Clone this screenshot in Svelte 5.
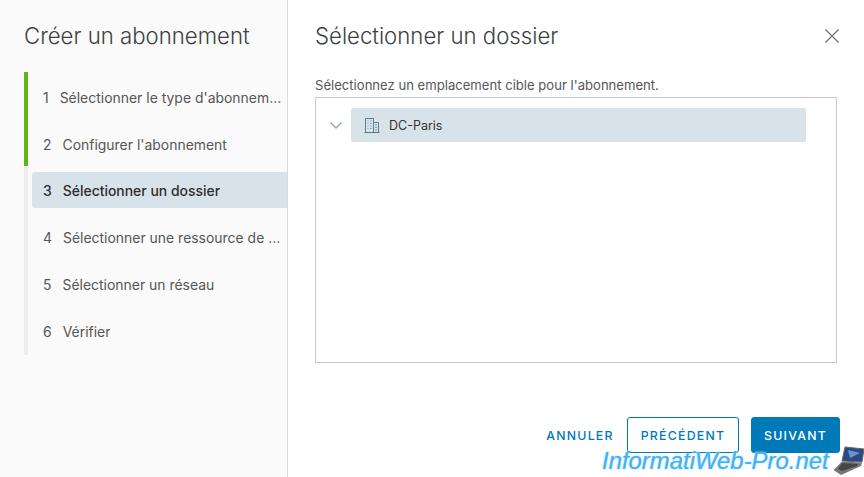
<script>
    const steps = [
        "Sélectionner le type d'abonnement",
        "Configurer l'abonnement",
        "Sélectionner un dossier",
        "Sélectionner une ressource de calcul",
        "Sélectionner un réseau",
        "Vérifier"
    ];
    const current = 2;
</script>

<div class="wizard">
    <aside>
        <h1>Créer un abonnement</h1>
        <ol>
            {#each steps as step, i}
                <li class:done={i < current} class:active={i === current}>
                    <div class="item">
                        <span class="num">{i + 1}</span>
                        <span class="text">{step}</span>
                    </div>
                </li>
            {/each}
        </ol>
    </aside>
    <main>
        <header>
            <h2>Sélectionner un dossier</h2>
            <button class="close" aria-label="Fermer">
                <svg width="16" height="16" viewBox="0 0 16 16"><path d="M1.5 1.5l13 13M14.5 1.5l-13 13" stroke="#6f6f6f" stroke-width="1.2" fill="none" /></svg>
            </button>
        </header>
        <p>Sélectionnez un emplacement cible pour l'abonnement.</p>
        <div class="tree">
            <svg class="chevron" width="14" height="9" viewBox="0 0 14 9"><path d="M1.5 1.5l5.5 5.5 5.5-5.5" stroke="#9aa3a8" stroke-width="1.3" fill="none" /></svg>
            <div class="node">
                <svg width="16" height="16" viewBox="0 0 16 16" fill="none">
                    <path d="M1.5 15V1.5H9.5V15" stroke="#5d7f94" stroke-width="1" />
                    <path d="M9.5 5.5H14.5V15" stroke="#5d7f94" stroke-width="1" />
                    <path d="M0.5 15.5H15.5" stroke="#4f7890" stroke-width="1" />
                    <path d="M3.5 4h1M6 4h1.5M3.5 6.5h1M6 6.5h1.5M3.5 9h1M6 9h1.5M3.5 11.5h1M6 11.5h1.5M11 8h2M11 10.5h2M11 13h2" stroke="#6fa3c4" stroke-width="1.1" />
                </svg>
                <span>DC-Paris</span>
            </div>
        </div>
        <footer>
            <button class="link">ANNULER</button>
            <button class="outline">PRÉCÉDENT</button>
            <button class="primary">SUIVANT</button>
        </footer>
    </main>
    <div class="watermark">
        <span>InformatiWeb-Pro.net</span>
        <svg width="32" height="30" viewBox="0 0 32 30">
            <path d="M12 1L31 3L29 16L9 15Z" fill="#2a4a86" stroke="#666" stroke-width="1" />
            <path d="M15 4L27 7L17 12Z" fill="#6a93cc" />
            <path d="M9 15.5L29 16.5L28 20L8 29L0.5 24Z" fill="#77777a" />
            <path d="M9 17L25 18L24 20L9 25L5 23Z" fill="#47474a" />
        </svg>
    </div>
</div>

<style>
    :global(body) {
        background: #fff;
    }
    .wizard {
        position: relative;
        display: flex;
        width: 864px;
        height: 477px;
        overflow: hidden;
        font-family: Inter, sans-serif;
        color: #565656;
    }
    aside {
        flex-shrink: 0;
        box-sizing: border-box;
        background: #fafafa;
        border-right: 1px solid #dcdcdc;
        width: 288px;
        padding: 22px 0 0 24px;
    }
    h1, h2 {
        margin: 0;
        font-weight: 300;
        font-size: 22.2px;
        line-height: 28px;
        color: #3a3f42;
        white-space: nowrap;
    }
    ol {
        list-style: none;
        margin: 22px 0 0;
        padding: 0;
        border-left: 4px solid #eeeeee;
        height: 283px;
    }
    li {
        box-sizing: border-box;
        height: 47px;
        padding: 6px 0 0 4px;
        margin-left: -4px;
        border-left: 4px solid transparent;
    }
    li.done {
        border-left-color: #60b515;
        padding-top: 7px;
    }
    .item {
        display: flex;
        align-items: center;
        gap: 11px;
        height: 36px;
        padding: 0 5px 0 11px;
        font-size: 13.95px;
        border-radius: 3px 0 0 3px;
        white-space: nowrap;
        overflow: hidden;
    }
    .num {
        flex-shrink: 0;
    }
    .text {
        overflow: hidden;
        text-overflow: ellipsis;
    }
    li.active .item {
        background: #d8e3e9;
        color: #2d2d2d;
        font-weight: 500;
    }
    main {
        flex: 1;
        display: flex;
        flex-direction: column;
        padding: 22px 24px 0 27px;
        min-width: 0;
    }
    header {
        display: flex;
        justify-content: space-between;
        align-items: center;
    }
    .close {
        border: 0;
        background: none;
        padding: 0;
        width: 16px;
        height: 16px;
    }
    p {
        margin: 27px 0 0;
        font-size: 13.1px;
        line-height: 16px;
    }
    .tree {
        box-sizing: border-box;
        width: 522px;
        height: 266px;
        margin-top: 4px;
        border: 1px solid #c9c9c9;
        padding: 10px 0 0 13px;
        display: flex;
        align-items: flex-start;
    }
    .chevron {
        margin: 13px 8px 0 0;
    }
    .node {
        width: 455px;
        height: 34px;
        background: #d8e3e9;
        display: flex;
        align-items: center;
        gap: 9px;
        padding-left: 13px;
        box-sizing: border-box;
        border-radius: 2px;
        font-size: 12.5px;
        color: #333;
    }
    footer {
        display: flex;
        justify-content: flex-end;
        align-items: center;
        gap: 12px;
        margin-top: 54px;
    }
    footer button {
        height: 36px;
        font-family: Inter, sans-serif;
        font-size: 12.3px;
        font-weight: 500;
        letter-spacing: 1.25px;
        border-radius: 3px;
        box-sizing: border-box;
        padding: 0;
    }
    .link {
        border: 0;
        background: none;
        color: #0079b8;
        width: 70px;
    }
    .outline {
        border: 1px solid #0079b8;
        background: #fff;
        color: #0079b8;
        width: 112px;
    }
    .primary {
        border: 1px solid #0079b8;
        background: #0079b8;
        color: #fff;
        width: 89px;
    }
    .watermark {
        position: absolute;
        left: 602px;
        top: 446px;
        display: flex;
        align-items: center;
        gap: 4px;
    }
    .watermark span {
        font-family: "Liberation Sans", sans-serif;
        font-style: italic;
        font-size: 23.9px;
        line-height: 26px;
        color: #45b0f3;
        white-space: nowrap;
        text-shadow: 0 0 2px #a5dcff, 0 0 1px #a5dcff;
    }
</style>
